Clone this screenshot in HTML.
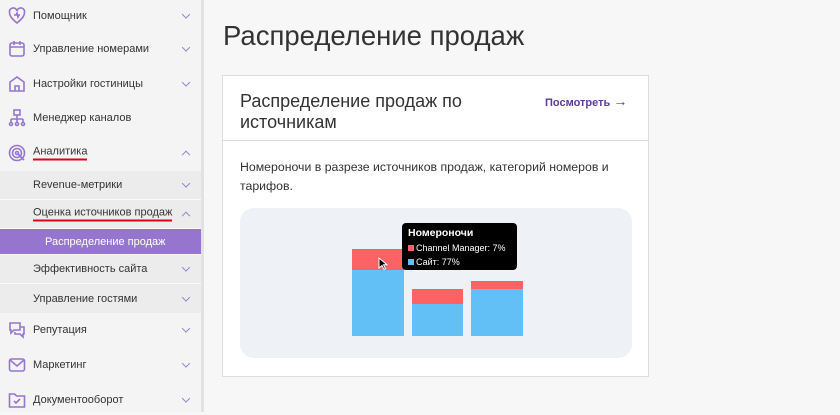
<!DOCTYPE html>
<html><head><meta charset="utf-8"><style>
*{box-sizing:border-box;margin:0;padding:0}
body{width:840px;height:412px;overflow:hidden;background:#f7f7f7;font-family:"Liberation Sans","DejaVu Sans",sans-serif;color:#333;position:relative}
.sb{position:absolute;left:0;top:0;width:204px;height:412px;background:#f4f4f4;border-right:3px solid #e2e2e2}
.it{position:absolute;left:0;width:201px;font-size:11px;color:#333}
.it .t{position:absolute;left:33px;top:50%;transform:translateY(-50%);white-space:nowrap}
.it svg.ic{position:absolute;left:8px;top:50%;transform:translateY(-50%)}
.ch{position:absolute;right:12px;top:50%;width:6px;height:6px;border-right:1.5px solid #9a86cf;border-bottom:1.5px solid #9a86cf;transform:translateY(-75%) rotate(45deg)}
.ch.up{transform:translateY(-20%) rotate(225deg)}
.sub{background:#ececec;border-bottom:1px solid #fafafa}
.ul{border-bottom:2px solid #e0001b;padding-bottom:1px}
.main h1{position:absolute;left:223px;top:20px;font-size:27.5px;font-weight:normal;color:#333}
.card{position:absolute;left:222px;top:75px;width:427px;height:302px;background:#fff;border:1px solid #ddd}
</style></head><body>
<div class="sb">
<div class="it" style="top:1px;height:30px"><svg class="ic" width="18" height="18" viewBox="0 0 18 18" fill="none" stroke="#9575cd" stroke-width="1.6"><path d="M9 16 C3 11 1.5 8.5 1.5 5.5 A3.7 3.7 0 0 1 9 4 A3.7 3.7 0 0 1 16.5 5.5 C16.5 8.5 15 11 9 16Z"/><path d="M6 8h2l1-2 1 4 1-2h1"/></svg><span class="t">Помощник</span><span class="ch"></span></div>
<div class="it" style="top:34px;height:30px"><svg class="ic" width="18" height="18" viewBox="0 0 18 18" fill="none" stroke="#9575cd" stroke-width="1.6"><rect x="2" y="3" width="14" height="13" rx="2"/><path d="M2 7h14M6 1v4M12 1v4"/></svg><span class="t">Управление номерами</span><span class="ch"></span></div>
<div class="it" style="top:69px;height:30px"><svg class="ic" width="18" height="18" viewBox="0 0 18 18" fill="none" stroke="#9575cd" stroke-width="1.6"><path d="M2 16V7l7-5 7 5v9zM7 16v-5h4v5"/></svg><span class="t">Настройки гостиницы</span><span class="ch"></span></div>
<div class="it" style="top:103px;height:30px"><svg class="ic" width="18" height="18" viewBox="0 0 18 18" fill="none" stroke="#9575cd" stroke-width="1.6"><rect x="6" y="1" width="6" height="5"/><path d="M9 6v4M3 10h12M3 10v3M9 10v3M15 10v3"/><circle cx="3" cy="15" r="1.5"/><circle cx="9" cy="15" r="1.5"/><circle cx="15" cy="15" r="1.5"/></svg><span class="t">Менеджер каналов</span></div>
<div class="it" style="top:138px;height:30px"><svg class="ic" width="18" height="18" viewBox="0 0 18 18" fill="none" stroke="#9575cd" stroke-width="1.6"><circle cx="9" cy="9" r="7.5"/><circle cx="9" cy="9" r="4.5"/><circle cx="9" cy="9" r="1.5"/><path d="M10 10l6 6"/></svg><span class="t ul">Аналитика</span><span class="ch up"></span></div>
<div class="it sub" style="top:171px;height:29px"><span class="t">Revenue-метрики</span><span class="ch"></span></div>
<div class="it sub" style="top:200px;height:29px"><span class="t ul">Оценка источников продаж</span><span class="ch up"></span></div>
<div class="it" style="top:229px;height:25px;background:#9575cd;color:#fff"><span class="t" style="left:45px">Распределение продаж</span></div>
<div class="it sub" style="top:255px;height:29px"><span class="t">Эффективность сайта</span><span class="ch"></span></div>
<div class="it sub" style="top:284px;height:29px;border-bottom:none"><span class="t">Управление гостями</span><span class="ch"></span></div>
<div class="it" style="top:315px;height:30px"><svg class="ic" width="18" height="18" viewBox="0 0 18 18" fill="none" stroke="#9575cd" stroke-width="1.6"><path d="M2 2h10v7H6l-3 3V9H2z"/><path d="M12 6h4v7h-1v3l-3-3H7v-2"/></svg><span class="t">Репутация</span><span class="ch"></span></div>
<div class="it" style="top:350px;height:30px"><svg class="ic" width="18" height="18" viewBox="0 0 18 18" fill="none" stroke="#9575cd" stroke-width="1.6"><rect x="1.5" y="3" width="15" height="12" rx="2"/><path d="M2 4l7 6 7-6"/></svg><span class="t">Маркетинг</span><span class="ch"></span></div>
<div class="it" style="top:385px;height:30px"><svg class="ic" width="18" height="18" viewBox="0 0 18 18" fill="none" stroke="#9575cd" stroke-width="1.6"><path d="M1.5 3h5l2 2h8v11h-15z"/><path d="M6 10l2 2 4-4"/></svg><span class="t">Документооборот</span><span class="ch"></span></div>
</div>
<div class="main">
<h1>Распределение продаж</h1>
<div class="card">
<div style="position:absolute;left:17px;top:15px;font-size:18px;line-height:21px;color:#333">Распределение продаж по<br>источникам</div>
<div style="position:absolute;left:322px;top:17px;font-size:11px;font-weight:bold;color:#5b3a9e">Посмотреть <span style="font-size:14px;font-weight:normal">→</span></div>
<div style="position:absolute;left:0;top:64px;width:100%;border-top:1px solid #ddd"></div>
<div style="position:absolute;left:17px;top:82px;font-size:12.3px;line-height:19px;color:#333">Номероночи в разрезе источников продаж, категорий номеров и<br>тарифов.</div>
<div style="position:absolute;left:17px;top:132px;width:392px;height:150px;background:#eef1f5;border-radius:14px">
<div style="position:absolute;left:112px;top:41px;width:52px;height:21px;background:#fe6265"></div>
<div style="position:absolute;left:112px;top:62px;width:52px;height:66px;background:#62c0f7"></div>
<div style="position:absolute;left:172px;top:81px;width:51px;height:15px;background:#fe6265"></div>
<div style="position:absolute;left:172px;top:96px;width:51px;height:32px;background:#62c0f7"></div>
<div style="position:absolute;left:231px;top:73px;width:52px;height:8px;background:#fe6265"></div>
<div style="position:absolute;left:231px;top:81px;width:52px;height:47px;background:#62c0f7"></div>
<svg style="position:absolute;left:138px;top:49px" width="10" height="14" viewBox="0 0 10 14"><path d="M1 1v10l3-2.5 2 4 1.5-.7-2-4H9z" fill="#000" stroke="#fff" stroke-width="1"/></svg>
<div style="position:absolute;left:162px;top:15px;width:115px;height:47px;background:#000;border-radius:4px;color:#fff;font-size:9px">
<div style="position:absolute;left:6px;top:4px;font-size:10.5px;font-weight:bold">Номероночи</div>
<div style="position:absolute;left:6px;top:20px"><span style="display:inline-block;width:6px;height:6px;background:#fe6265;margin-right:2px"></span>Channel Manager: 7%</div>
<div style="position:absolute;left:6px;top:34px"><span style="display:inline-block;width:6px;height:6px;background:#62c0f7;margin-right:2px"></span>Сайт: 77%</div>
</div>
</div>
</div>
</div>
</body></html>
